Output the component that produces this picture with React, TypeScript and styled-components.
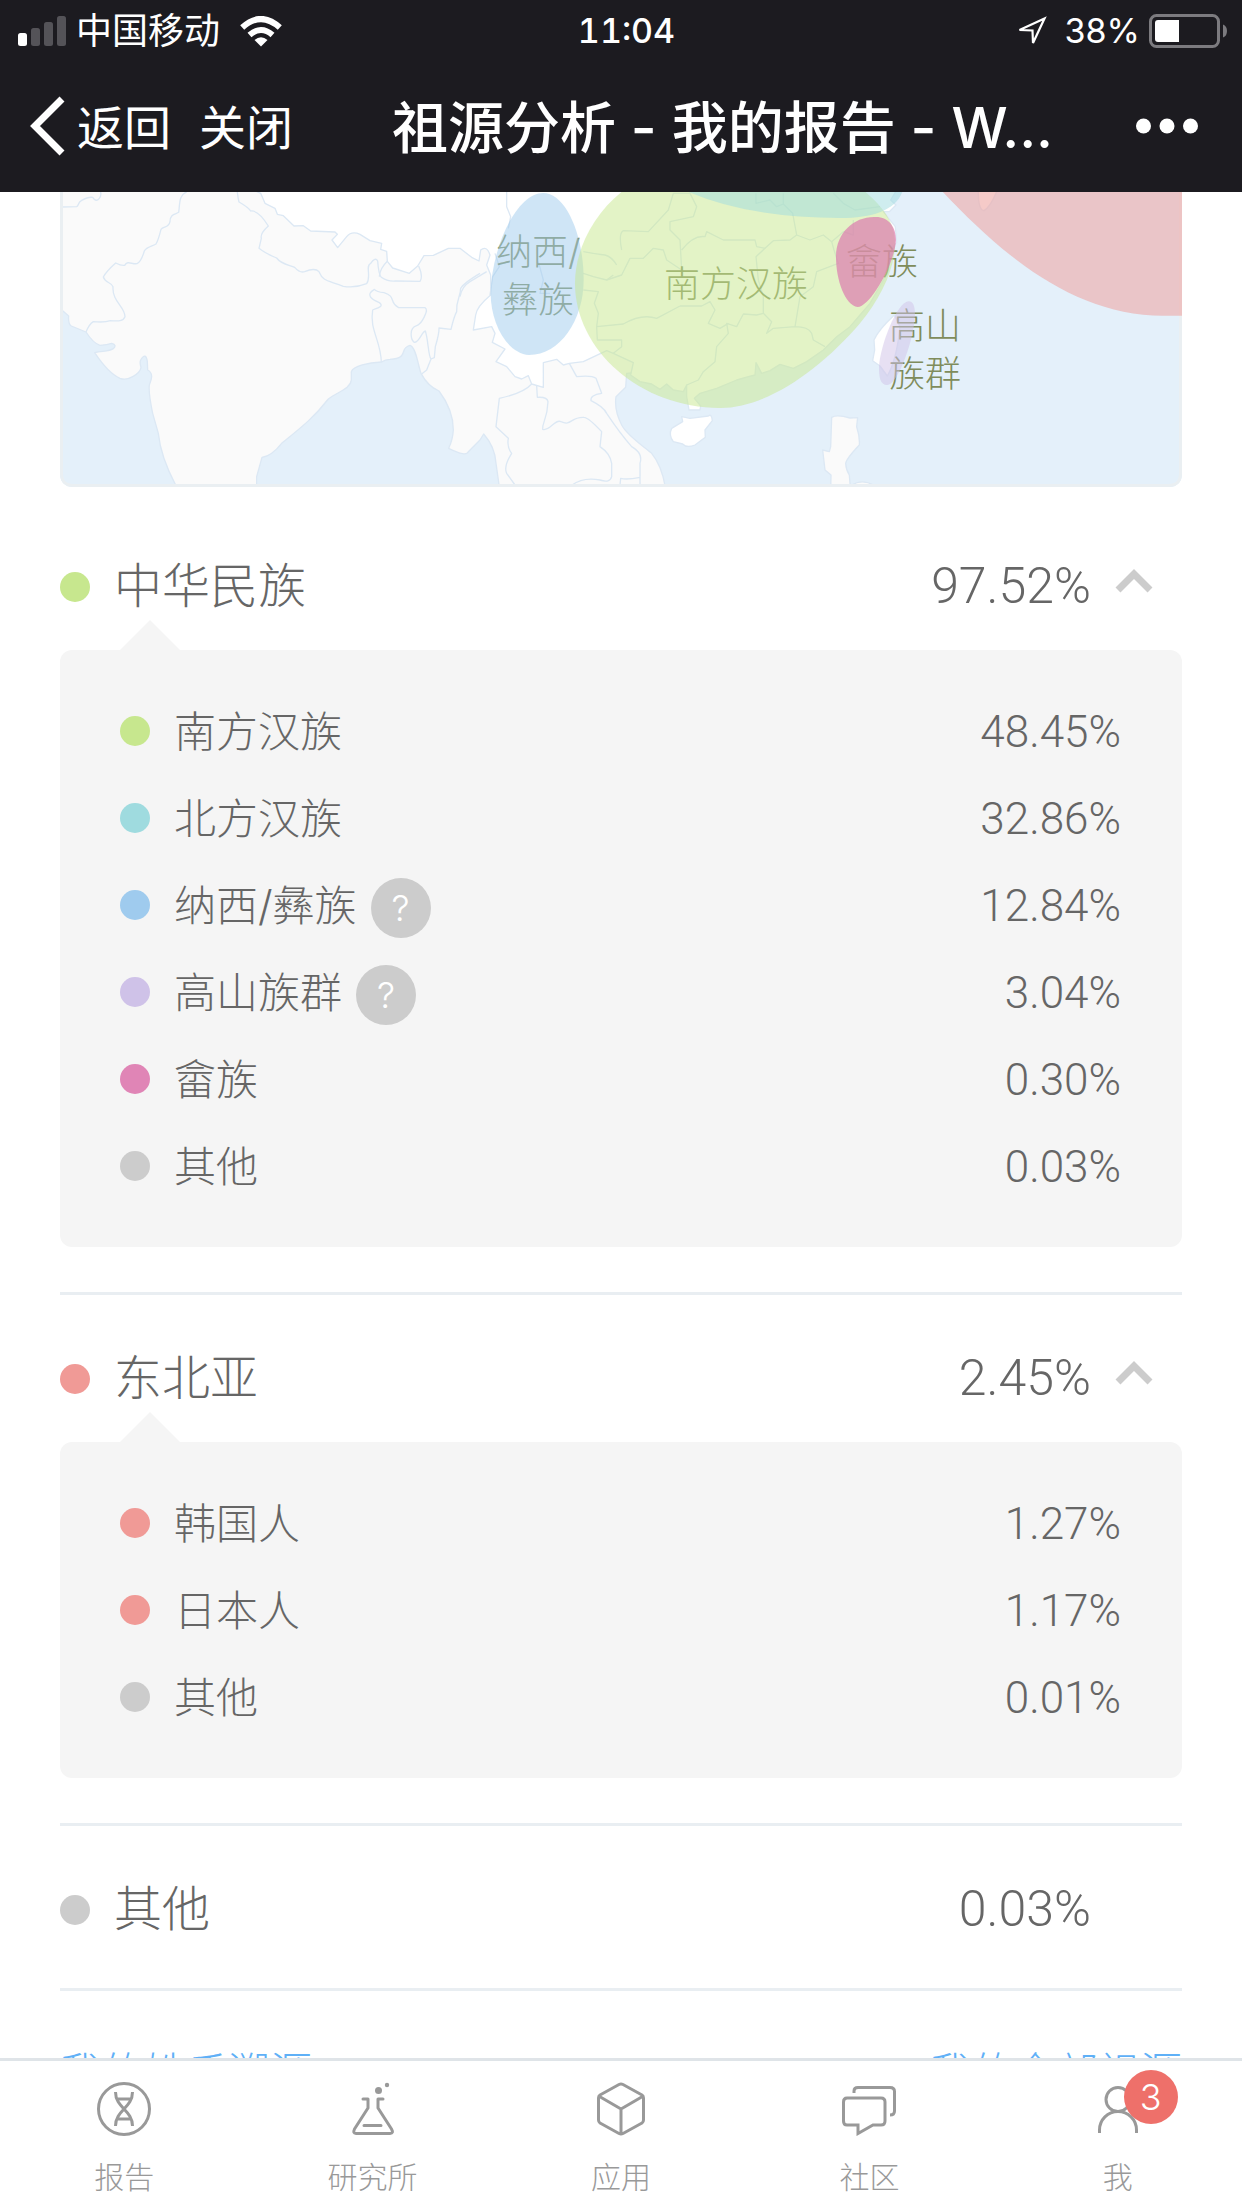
import React, { useState } from 'react';
import styled, { createGlobalStyle } from 'styled-components';

const GlobalStyle = createGlobalStyle`
  *, *::before, *::after { box-sizing: border-box; }
  body {
    margin: 0;
    background: #fff;
    color: #666;
    font-family: Inter, 'Noto Sans CJK SC', sans-serif;
    font-weight: 300;
  }
  button { border: 0; padding: 0; margin: 0; background: none; color: inherit; font: inherit; }
  a { color: inherit; text-decoration: none; }
  svg { display: block; flex: none; }
`;

const Screen = styled.div`
  display: flex;
  flex-direction: column;
  height: 100vh;
`;

const Top = styled.header`
  flex: none;
  background: #1c1b20;
  color: #fff;
`;

const StatusBar = styled.div`
  display: grid;
  grid-template-columns: 1fr auto 1fr;
  align-items: center;
  height: 60px;
  padding: 2px 15px 0 18px;
  font-size: 36px;
  line-height: 58px;
  font-weight: 400;
`;

const StatusGroup = styled.div<{ $end?: boolean }>`
  display: flex;
  align-items: center;
  justify-content: ${(p) => (p.$end ? 'flex-end' : 'flex-start')};
  gap: 9px;
`;

const Carrier = styled.span`
  margin-right: 11px;
`;

const Charge = styled.span`
  margin-left: 9px;
  font-size: 34px;
`;

const Clock = styled.time`
  padding-left: 8px;
  font-size: 34px;
  font-weight: 500;
  font-variant-numeric: tabular-nums;
`;

const NavBar = styled.nav`
  display: flex;
  align-items: center;
  height: 132px;
  padding: 0 44px 0 30px;
  font-size: 47px;
  line-height: 72px;
  font-weight: 400;
`;

const NavButton = styled.button`
  display: flex;
  align-items: center;
  gap: 12px;
  margin-right: 28px;

  span { padding-top: 3px; }
`;

const NavTitle = styled.h1`
  flex: 1;
  margin: 0;
  padding: 3px 12px 0 0;
  font-size: 56px;
  line-height: 84px;
  font-weight: 500;
  text-align: center;
  white-space: nowrap;
`;

const Content = styled.main`
  flex: 1;
  min-height: 0;
  overflow: hidden;
  padding: 0 60px;
`;

const MapCard = styled.figure`
  margin: 0 0 37px;
  overflow: hidden;
  border-radius: 0 0 12px 12px;

  svg { width: 100%; height: auto; }
`;

const Group = styled.section`
  border-bottom: 3px solid #e9eef2;
  margin-bottom: 21px;

  &:last-of-type { padding-bottom: 15px; }
`;

const GroupHead = styled.button`
  display: flex;
  align-items: center;
  width: 100%;
  height: 126px;
  padding-right: 29px;
  gap: 24px;
  font-size: 48px;
  line-height: 72px;
  text-align: left;
`;

const GroupName = styled.span`
  padding-bottom: 3px;
`;

const Dot = styled.span<{ $color: string }>`
  flex: none;
  width: 30px;
  height: 30px;
  border-radius: 50%;
  background: ${(p) => p.$color};
`;

const Percent = styled.span<{ $large?: boolean }>`
  margin-left: auto;
  padding: ${(p) => (p.$large ? '0 0 3px' : '3px 1px 0 0')};
  font-family: Roboto, sans-serif;
  font-size: ${(p) => (p.$large ? 50 : 44)}px;
`;

const ChevronSlot = styled.span`
  width: 38px;
  padding-bottom: 12px;
`;

const Panel = styled.ul`
  position: relative;
  list-style: none;
  margin: 0 0 45px;
  padding: 37px 60px 38px;
  border-radius: 12px;
  background: #f5f5f5;

  &::before {
    content: '';
    position: absolute;
    left: 60px;
    bottom: 100%;
    border: 30px solid transparent;
    border-top-width: 0;
    border-bottom-color: #f5f5f5;
  }
`;

const Row = styled.li`
  display: flex;
  align-items: center;
  gap: 24px;
  height: 87px;
  font-size: 42px;
  line-height: 60px;
`;

const RowLabel = styled.span`
  display: flex;
  align-items: center;
  gap: 14px;
  padding-top: 2px;
`;

const Help = styled.button`
  width: 60px;
  height: 60px;
  margin-top: 4px;
  border-radius: 50%;
  background: #ccc;
  color: #fff;
  font-size: 36px;
  line-height: 60px;
  text-align: center;
`;

const Links = styled.div`
  display: flex;
  justify-content: space-between;
  padding-top: 31px;
  font-size: 42px;
  line-height: 60px;
  color: #5fb0f7;
`;

const TabBar = styled.nav`
  flex: none;
  display: grid;
  grid-template-columns: repeat(5, 1fr);
  height: 150px;
  border-top: 3px solid #dfe4e8;
  background: #fff;
`;

const Tab = styled.a`
  display: flex;
  flex-direction: column;
  align-items: center;
  gap: 20px;
  padding-top: 21px;
  color: #999;
  font-size: 30px;
  line-height: 42px;
`;

const TabIcon = styled.span`
  position: relative;
`;

const Badge = styled.span`
  position: absolute;
  left: 33px;
  top: -12px;
  width: 54px;
  height: 54px;
  border-radius: 50%;
  background: #ee706a;
  color: #fff;
  font-size: 36px;
  line-height: 54px;
  text-align: center;
`;

const SignalIcon = () => (
  <svg width="49" height="30" viewBox="0 0 49 30" aria-hidden="true">
    <rect x="0" y="17" width="9" height="13" rx="2.5" fill="#fff" />
    <g fill="#545358">
      <rect x="13" y="12" width="9" height="18" rx="2.5" />
      <rect x="26" y="6" width="9" height="24" rx="2.5" />
      <rect x="39" y="0" width="9" height="30" rx="2.5" />
    </g>
  </svg>
);

const WifiIcon = () => (
  <svg width="42" height="31" viewBox="0 0 42 31" aria-hidden="true">
    <path d="M21 30.500L14.500 24Q21 18.500 27.500 24Z" fill="#fff" />
    <g fill="none" stroke="#fff" strokeWidth="6">
      <path d="M9.500 19Q21 9 32.500 19" />
      <path d="M2.200 11.500Q21 -5.500 39.800 11.500" />
    </g>
  </svg>
);

const LocationIcon = () => (
  <svg width="30" height="30" viewBox="0 0 30 30" aria-hidden="true">
    <path d="M27.500 2.500L2.500 14L15.500 14.500L16 27Z" fill="none" stroke="#fff" strokeWidth="2.200" />
  </svg>
);

const BatteryIcon = () => (
  <svg width="78" height="34" viewBox="0 0 78 34" aria-hidden="true">
    <rect x="1.500" y="1.500" width="68" height="31" rx="6" fill="none" stroke="#7c7b7f" strokeWidth="3" />
    <path d="M9 6H30V28H9Q6 28 6 25V9Q6 6 9 6Z" fill="#fff" />
    <path d="M74 10.500Q78 12 78 17T74 23.500Z" fill="#7c7b7f" />
  </svg>
);

const BackIcon = () => (
  <svg width="35" height="60" viewBox="0 0 35 60" aria-hidden="true">
    <path d="M32 3L5 30L32 57" fill="none" stroke="#fff" strokeWidth="7" />
  </svg>
);

const MoreIcon = () => (
  <svg width="62" height="16" viewBox="0 0 62 16" fill="#fff" aria-hidden="true">
    <circle cx="7.500" cy="8" r="7.500" />
    <circle cx="31" cy="8" r="7.500" />
    <circle cx="54.500" cy="8" r="7.500" />
  </svg>
);

const ChevronIcon = ({ open }: { open: boolean }) => (
  <svg width="38" height="24" viewBox="0 0 38 24" aria-hidden="true">
    <path d={open ? 'M3 21L19 5L35 21' : 'M3 3L19 19L35 3'} fill="none" stroke="#ccc" strokeWidth="7" />
  </svg>
);

const ReportIcon = () => (
  <svg width="54" height="54" viewBox="0 0 54 54" fill="none" stroke="#999" strokeWidth="3" aria-hidden="true">
    <circle cx="27" cy="27" r="25.500" />
    <path d="M18.500 10C18.500 26 35.500 28 35.500 44M35.500 10C35.500 26 18.500 28 18.500 44M20 17H34M20 37H34" />
  </svg>
);

const LabIcon = () => (
  <svg width="54" height="54" viewBox="0 0 54 54" fill="none" stroke="#999" strokeWidth="3" strokeLinecap="round" strokeLinejoin="round" aria-hidden="true">
    <path d="M17 17H22V26L8.500 47Q6.500 51.500 10 51.500H44Q48 51.500 45.500 47L32 26V17H37M18 43.500H35" />
    <circle cx="32.500" cy="8.500" r="3.500" fill="#999" stroke="none" />
    <circle cx="41" cy="3" r="2.200" fill="#999" stroke="none" />
  </svg>
);

const AppsIcon = () => (
  <svg width="54" height="54" viewBox="0 0 54 54" fill="none" stroke="#999" strokeWidth="3" strokeLinejoin="round" aria-hidden="true">
    <path d="M25 2.500Q27 1.500 29 2.500L48 13Q49.500 14 49.500 16V38Q49.500 40 48 41L29 51.500Q27 52.500 25 51.500L6 41Q4.500 40 4.500 38V16Q4.500 14 6 13ZM5.500 14.500L27 27L48.500 14.500M27 27V52" />
  </svg>
);

const CommunityIcon = () => (
  <svg width="54" height="54" viewBox="0 0 54 54" fill="none" stroke="#999" strokeWidth="3" aria-hidden="true">
    <path d="M5 16H39Q43 16 43 20V39Q43 43 39 43H31L16 51.500V43H5Q1.500 43 1.500 39V20Q1.500 16 5 16Z" />
    <path d="M12 11V9Q12 5.500 16 5.500H48Q52.500 5.500 52.500 9.500V29Q52.500 33 48 33" />
  </svg>
);

const MeIcon = () => (
  <svg width="54" height="54" viewBox="0 0 54 54" fill="none" stroke="#999" strokeWidth="3" aria-hidden="true">
    <circle cx="27" cy="17.500" r="12" />
    <path d="M8.500 51V48A18.500 18.500 0 0 1 45.500 48V51" />
  </svg>
);

const AncestryMap = () => (
  <svg viewBox="0 0 1122 295" role="img" aria-label="祖源分布">
    <rect width="1122" height="295" fill="#fafafa" />
    <g fill="none" stroke="#dce8f4" strokeWidth="4" strokeLinejoin="round">
      {/* South Asia: borders and the two seas around the peninsula */}
      <g transform="translate(-20 -12) scale(0.33333)">
        <path d="M66 81L110 80C118 76 112 68 125 61Q145 50 158 52Q168 68 178 55Q184 48 182 36" />
        <path d="M440 36C415 45 420 75 416 97C408 103 390 100 390 125C386 145 370 138 363 148Q355 180 348 192C335 200 320 200 313 213C308 230 302 246 291 251C277 254 262 240 254 256Q245 258 227 249Q198 275 190 291C195 308 215 308 219 320C216 365 255 380 255 410C248 428 225 422 211 422Q195 428 160 425Q148 432 138 456" />
        <path d="M592 36Q594 55 597 66Q625 82 632 93Q655 90 685 138Q660 160 664 175L657 205Q675 220 710 234C725 255 752 255 764 262Q780 280 794 275Q825 262 837 275C850 305 860 300 910 319Q945 325 980 311C995 290 975 258 992 250Q1006 230 1013 243Q1016 285 1024 292Q1042 305 1067 303L1140 304Q1150 290 1136 258" />
        <path d="M1042 244Q1020 265 1018 290" />
        <path d="M1024 546C1022 480 988 450 998 390C1008 385 1035 380 1018 368C995 358 975 345 1003 328Q1010 336 1032 338C1070 350 1045 365 1076 383H1155C1168 390 1145 432 1130 437C1105 445 1113 480 1123 487C1138 488 1145 455 1156 453C1165 480 1165 530 1173 537L1160 570L1145 582" />
        <path d="M1173 537L1183 533L1186 500Q1198 460 1197 444L1233 448Q1242 410 1250 395C1248 360 1262 350 1262 325Q1270 310 1320 280" />
        <path fill="#e4f0fa" d="M50 380L69 393L86 408Q84 432 94 438L138 456Q160 490 180 496Q202 494 215 490Q232 495 220 506C205 516 185 512 164 518Q205 580 240 595C265 605 300 580 303 563C302 555 298 548 302 540Q318 515 322 545L323 570C342 580 334 600 328 615C325 640 334 680 338 700L355 760Q362 830 407 915L410 935H50Z" />
        <path fill="#e4f0fa" d="M650 935V890L666 832Q695 828 725 790C780 745 820 715 865 657C895 635 932 625 934 600V575C940 558 985 548 1025 546Q1035 538 1050 538C1110 535 1075 505 1110 496C1128 500 1135 560 1143 580Q1163 618 1197 633Q1240 690 1240 750Q1238 780 1226 805Q1280 832 1285 815L1320 780L1331 762Q1365 800 1368 850L1380 935Z" />
      </g>
      {/* East Asia: the southern sea, mainland, islands and province lines */}
      <g transform="translate(400 -12) scale(0.33333)">
        <path fill="#e4f0fa" d="M618 935Q608 860 575 820C545 795 500 765 485 735Q462 690 468 650L497 622L500 580L700 560L1100 380L1280 20H2200V935Z" />
        <path fill="#fff" d="M-620 30L-598 40L-585 70L-555 85L-548 103L-530 107L-498 138L-470 137L-448 153L-375 156L-368 163L-384 180L-367 203L-340 170Q-325 152 -300 163L-270 182L-235 190L-238 208L-220 214L-218 244L-202 264L-152 280L-127 258L-108 227L-80 226L-35 205L0 205L35 232L57 243L62 210Q80 195 90 225L80 255L92 285V345Q50 380 47 405L40 450L95 440L105 460L97 487L135 507L108 545L140 560L165 590L185 597L205 587L215 612L250 622V548L290 538L310 555L328 550L370 545L440 512L460 520L520 548L512 585L540 605L575 612L600 628L620 612L640 630L670 635L680 615V650L687 690H720L722 678L703 655L720 640L770 625L830 600L865 590L885 585L888 548L905 580L930 572L960 553L1000 565L1040 545L1090 510L1130 470L1170 440L1200 405L1230 370L1270 300L1300 200L1310 188L1306 140L1270 95H1288L1308 75L1292 60L1310 30L1300 0H-620Z" />
        <path d="M140 36V80L152 110L145 145M105 220L118 260L98 290L90 345M235 245L250 300L240 340H270" />
        <path d="M0 350Q5 320 30 305L80 275M215 612Q190 640 118 655L108 740L145 775Q140 800 155 820Q130 860 140 880L165 915" />
        <path d="M230 618L232 652Q262 650 264 665C262 720 245 730 248 748C270 755 285 715 303 725C335 740 330 710 372 712Q385 712 425 755L420 800Q450 820 455 850V890Q450 910 420 900Q370 890 336 915M328 550L350 590Q395 585 408 595L425 640Q390 645 393 662Q430 680 440 700Q480 760 515 800Q550 820 540 850V915M540 892Q500 900 482 895L480 915" />
        <path d="M370 215Q405 222 435 225Q455 230 470 255M370 280L400 290L440 300L460 285M370 330L415 335L403 370L415 400L410 440L490 432Q545 400 590 415L660 378" />
        <path d="M410 440L412 480H485V500L460 520M485 210Q475 160 490 152L565 155L625 90L640 40H690L710 80L700 110L630 125V150L660 180L665 270L620 240L610 210L580 205L550 235L510 235L485 285L440 300M665 210Q700 165 735 170L740 155L790 180H885L890 200L915 205L888 230L895 300L910 350V400L890 405L850 402L830 440L800 430L805 460L770 500L765 545L730 575L715 600L680 615" />
        <path d="M660 378H725L750 365L765 390L745 430L780 445L805 430M888 40V70L930 60L950 80L970 72V40M970 72L998 100L1010 165L990 180L940 182L915 205M1010 165L1050 180L1090 165L1115 185L1150 155L1180 165V120M1115 185L1122 210L1135 250L1070 275L1060 320L1020 350L1005 440L940 445L920 460L935 425L910 400M1005 440Q1045 440 1055 460L1060 480L1095 500M1120 40L1150 70L1185 90L1260 80" />
        <path fill="#fff" d="M665 710L690 715L745 708Q755 700 757 722L735 750L736 772L705 795Q680 805 668 792L640 785Q625 765 635 745L668 725Z" />
        <path fill="#fff" d="M1303 405Q1255 450 1242 480L1244 510L1238 542L1260 558L1282 588Q1310 540 1320 440Z" />
        <path fill="#fafafa" d="M1115 712Q1130 702 1170 714L1193 713L1190 740Q1200 770 1198 795Q1160 835 1157 850Q1158 870 1168 885L1172 935H1112L1113 885L1095 870L1088 810L1108 815L1112 800Z" />
        <path fill="#fafafa" d="M1175 916Q1205 895 1242 916ZM1555 30Q1554 90 1572 92Q1592 80 1612 30Z" />
      </g>
    </g>

    <path d="M1.500 0V281.500Q1.500 293.500 13.500 293.500H1108.500Q1120.500 293.500 1120.500 281.500V0" fill="none" stroke="#eaeff2" strokeWidth="3" />

    <g fill="#7f8c5b" fontSize="36" fontWeight="300">
      <text x="436" y="73">纳西/</text>
      <text x="442" y="121">彝族</text>
      <text x="604" y="105">南方汉族</text>
      <text x="786" y="83">畲族</text>
      <text x="829" y="147">高山</text>
      <text x="829" y="195">族群</text>
    </g>

    <g transform="translate(400 -12) scale(0.33333)">
      <path fill="#9fcbee" fillOpacity="0.500" d="M250 39C315 39 371 160 371 300C371 420 300 525 207 525C140 520 92 430 92 340C95 200 170 39 250 39Z" />
      <path fill="#c7e78e" fillOpacity="0.500" d="M492 30C400 100 345 210 345 310C345 510 540 684 780 684C920 684 1080 570 1200 430C1265 350 1308 260 1305 180C1300 110 1250 65 1210 30Z" />
      <path fill="#9fdbdf" fillOpacity="0.500" d="M672 30Q860 114 1140 114C1240 114 1310 90 1329 30Z" />
      <path fill="#dc78ae" fillOpacity="0.680" d="M1242 111C1285 108 1308 140 1308 180C1305 250 1230 381 1193 381C1155 375 1128 300 1128 230C1128 160 1180 111 1242 111Z" />
      <path fill="#cfc2e8" fillOpacity="0.500" d="M1347 364C1365 364 1366 395 1364 420C1355 500 1310 615 1282 615C1260 615 1257 590 1257 560C1260 500 1310 364 1347 364Z" />
      <path fill="#f09a96" fillOpacity="0.500" d="M1443 30C1640 240 1850 407 2110 407H2170V30Z" />
    </g>
  </svg>
);

type Item = { name: string; value: string; color: string; help?: boolean };
type Region = { name: string; value: string; color: string; items?: Item[] };

const regions: Region[] = [
  {
    name: '中华民族',
    value: '97.52%',
    color: '#c7e78e',
    items: [
      { name: '南方汉族', value: '48.45%', color: '#c7e78e' },
      { name: '北方汉族', value: '32.86%', color: '#9fdbdf' },
      { name: '纳西/彝族', value: '12.84%', color: '#9fcbee', help: true },
      { name: '高山族群', value: '3.04%', color: '#cfc2e8', help: true },
      { name: '畲族', value: '0.30%', color: '#e085b6' },
      { name: '其他', value: '0.03%', color: '#ccc' },
    ],
  },
  {
    name: '东北亚',
    value: '2.45%',
    color: '#f09a96',
    items: [
      { name: '韩国人', value: '1.27%', color: '#f09a96' },
      { name: '日本人', value: '1.17%', color: '#f09a96' },
      { name: '其他', value: '0.01%', color: '#ccc' },
    ],
  },
  { name: '其他', value: '0.03%', color: '#ccc' },
];

const tabs = [
  { label: '报告', icon: <ReportIcon /> },
  { label: '研究所', icon: <LabIcon /> },
  { label: '应用', icon: <AppsIcon /> },
  { label: '社区', icon: <CommunityIcon /> },
  { label: '我', icon: <MeIcon />, badge: 3 },
];

function RegionGroup({ region }: { region: Region }) {
  const [open, setOpen] = useState(true);
  return (
    <Group>
      <GroupHead type="button" aria-expanded={region.items ? open : undefined} onClick={() => setOpen(!open)}>
        <Dot $color={region.color} />
        <GroupName>{region.name}</GroupName>
        <Percent $large>{region.value}</Percent>
        <ChevronSlot>{region.items && <ChevronIcon open={open} />}</ChevronSlot>
      </GroupHead>
      {region.items && open && (
        <Panel>
          {region.items.map((item) => (
            <Row key={item.name}>
              <Dot $color={item.color} />
              <RowLabel>
                {item.name}
                {item.help && <Help type="button" aria-label={`${item.name}说明`}>?</Help>}
              </RowLabel>
              <Percent>{item.value}</Percent>
            </Row>
          ))}
        </Panel>
      )}
    </Group>
  );
}

export default function App() {
  return (
    <Screen>
      <GlobalStyle />
      <Top>
        <StatusBar>
          <StatusGroup>
            <SignalIcon />
            <Carrier>中国移动</Carrier>
            <WifiIcon />
          </StatusGroup>
          <Clock>11:04</Clock>
          <StatusGroup $end>
            <LocationIcon />
            <Charge>38%</Charge>
            <BatteryIcon />
          </StatusGroup>
        </StatusBar>
        <NavBar>
          <NavButton type="button"><BackIcon /><span>返回</span></NavButton>
          <NavButton type="button"><span>关闭</span></NavButton>
          <NavTitle>祖源分析 - 我的报告 - W...</NavTitle>
          <button type="button" aria-label="更多"><MoreIcon /></button>
        </NavBar>
      </Top>
      <Content>
        <MapCard><AncestryMap /></MapCard>
        {regions.map((region) => (
          <RegionGroup key={region.name} region={region} />
        ))}
        <Links>
          <a href="#surname">我的姓氏溯源</a>
          <a href="#all">我的全部祖源</a>
        </Links>
      </Content>
      <TabBar>
        {tabs.map((tab) => (
          <Tab key={tab.label} href={`#${tab.label}`}>
            <TabIcon>
              {tab.icon}
              {tab.badge && <Badge>{tab.badge}</Badge>}
            </TabIcon>
            {tab.label}
          </Tab>
        ))}
      </TabBar>
    </Screen>
  );
}
